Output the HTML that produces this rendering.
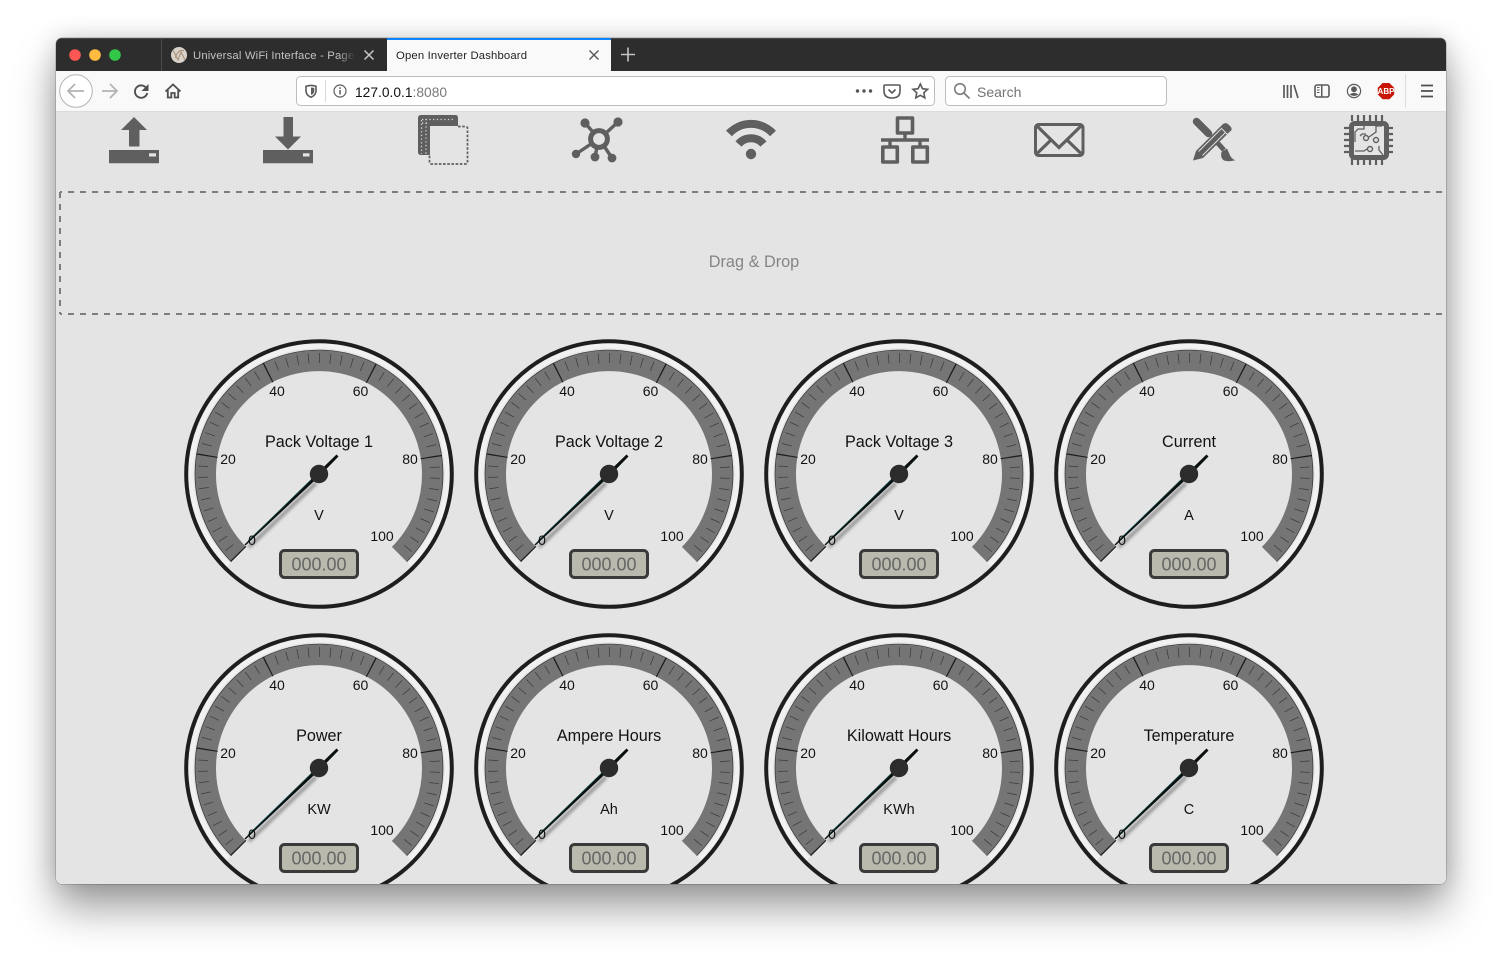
<!DOCTYPE html>
<html><head><meta charset="utf-8"><title>Open Inverter Dashboard</title>
<style>
html,body{margin:0;padding:0;width:1502px;height:958px;background:#fff;overflow:hidden;font-family:"Liberation Sans",sans-serif}
#win{position:absolute;left:56px;top:38px;width:1390px;height:846px;border-radius:6px;overflow:hidden;background:#e4e4e4}
#sh{position:absolute;left:56px;top:38px;width:1390px;height:846px;border-radius:6px;box-shadow:0 24px 42px rgba(0,0,0,.38),0 0 24px rgba(0,0,0,.15),0 0 0 .5px rgba(0,0,0,.3)}
svg{position:absolute;left:-56px;top:-38px;width:1502px;height:958px}
text{font-family:"Liberation Sans",sans-serif}
.n{font-size:14px;fill:#111;text-anchor:middle}
.t{font-size:16.2px;fill:#111;text-anchor:middle}
.u{font-size:14.5px;fill:#111;text-anchor:middle}
.l{font-size:18px;fill:#666;text-anchor:middle}
.i{fill:#5f5f5f}
.s{fill:none;stroke:#5f5f5f}
.b{fill:none;stroke:#5a5a5c;stroke-width:1.6}
.gz{filter:blur(.35px)}
</style></head><body>
<div id="sh"></div>
<div id="win">
<svg viewBox="0 0 1502 958">
<defs>
<filter id="ns" x="-30%" y="-30%" width="160%" height="160%"><feGaussianBlur stdDeviation="1.6"/></filter>
<linearGradient id="fade" x1="0" x2="1"><stop offset="0" stop-color="#2d2d2d" stop-opacity="0"/><stop offset="1" stop-color="#2d2d2d"/></linearGradient>
<g id="dial">
<path d="M-91 91A128.700 128.700 0 1 1 91 91" fill="none" stroke="#f1f1f1" stroke-width="6"/>
<circle r="132.800" fill="none" stroke="#1e1e1e" stroke-width="4"/>
<path d="M-80.300 80.300A113.500 113.500 0 1 1 80.300 80.300" fill="none" stroke="#757575" stroke-width="21"/>
<path d="M-87.700 87.700A124 124 0 1 1 87.700 87.700" fill="none" stroke="#333" stroke-width=".7"/>
<path d="M-82 82A116 116 0 1 1 82 82" fill="none" stroke="#3c3c3c" stroke-width="10" stroke-dasharray=".75 10.18"/>
<path d="M-80.300 80.300A113.500 113.500 0 1 1 80.300 80.300" fill="none" stroke="#1c1c1c" stroke-width="21.500" stroke-dasharray="1.200 105.770"/>
<path d="M-70 73L-3 9" fill="none" stroke="#000" stroke-width="3" opacity=".42" filter="url(#ns)"/>
<path d="M-74.500 70.500L-1.300 -1.300L17.500 -19.500L19.500 -17.500L1.300 1.300L-73.500 71.500Z" fill="#0a0f0f"/>
<path d="M-71 67L-8 6" fill="none" stroke="#0e4a4a" stroke-width=".7"/>
<circle r="9.200" fill="#2c2c2c"/>
</g>
</defs>
<rect x="0" y="0" width="1502" height="958" fill="#e4e4e4"/>
<!-- tab strip -->
<rect x="56" y="38" width="1390" height="33" fill="#2d2d2d"/>
<rect x="56" y="38" width="1390" height="1" fill="#4a4a4a"/>
<circle cx="75" cy="55" r="5.800" fill="#fc5753"/><circle cx="95" cy="55" r="5.800" fill="#fdbc40"/><circle cx="115" cy="55" r="5.800" fill="#33c748"/>
<rect x="161" y="39" width="1" height="32" fill="#4c4c4c"/>
<circle cx="179" cy="55" r="8" fill="#d8d4cc"/>
<path d="M173 50L178 60L181 52L185 60M175 58Q179 48 184 51" fill="none" stroke="#a98a70" stroke-width="1"/>
<text x="193" y="59" font-size="11.300" fill="#c4c4c4" letter-spacing=".16">Universal WiFi Interface - Page</text>
<rect x="338" y="42" width="17" height="26" fill="url(#fade)"/>
<rect x="355" y="42" width="31" height="26" fill="#2d2d2d"/>
<path d="M364.500 50.500l9 9M373.500 50.500l-9 9" stroke="#c8c8c8" stroke-width="1.500" fill="none"/>
<rect x="387" y="38" width="224" height="33" fill="#f9f9fa"/>
<rect x="387" y="38" width="224" height="2" fill="#0a84ff"/>
<text x="396" y="59" font-size="11.300" fill="#222" letter-spacing=".16">Open Inverter Dashboard</text>
<path d="M589.500 50.500l9 9M598.500 50.500l-9 9" stroke="#555" stroke-width="1.400" fill="none"/>
<path d="M628 47.500v14M621 54.500h14" stroke="#c4c4c4" stroke-width="1.600" fill="none"/>
<!-- toolbar -->
<rect x="56" y="71" width="1390" height="40" fill="#f9f9fa"/>
<rect x="56" y="111" width="1390" height="1" fill="#dcdcdc"/>
<circle cx="76" cy="91" r="16.300" fill="#fff" stroke="#b4b4b6" stroke-width="1"/>
<path d="M84 91H68.500M75 84l-7 7 7 7" fill="none" stroke="#b2b2b4" stroke-width="1.700"/>
<path d="M117 91H102M110 84l7 7-7 7" fill="none" stroke="#b2b2b4" stroke-width="1.700"/>
<path d="M147 89.500a6.200 6.200 0 1 0 .2 3.500" fill="none" stroke="#4f4f51" stroke-width="1.900"/>
<path d="M148.500 84v7h-7Z" fill="#4f4f51"/>
<path d="M165.500 91.500L173 84.500l7.500 7M167.800 90v7.500h3.500v-4.500h3.400v4.500h3.500V90" fill="none" stroke="#4f4f51" stroke-width="1.800"/>
<rect x="296.500" y="76.500" width="638" height="29" rx="4" fill="#fff" stroke="#bdbdbd"/>
<path d="M306 86.200q5-1.600 10 0v4.500q0 4.500-5 6.500q-5-2-5-6.500Z" fill="none" stroke="#5a5a5c" stroke-width="1.600"/>
<path d="M311 87.500q2 0 3.300.5v3q0 2.500-3.300 4Z" fill="#5a5a5c"/>
<rect x="325" y="80" width="1" height="22" fill="#d8d8d8"/>
<circle cx="340" cy="91" r="6" fill="none" stroke="#5a5a5c" stroke-width="1.200"/>
<rect x="339.300" y="90" width="1.500" height="4.500" fill="#5a5a5c"/><rect x="339.300" y="87.300" width="1.500" height="1.600" fill="#5a5a5c"/>
<text x="355" y="97" font-size="13.800" fill="#111">127.0.0.1<tspan fill="#7a7a7a">:8080</tspan></text>
<circle cx="857.500" cy="91" r="1.700" fill="#55555a"/><circle cx="864" cy="91" r="1.700" fill="#55555a"/><circle cx="870.500" cy="91" r="1.700" fill="#55555a"/>
<path d="M885 85h14q1 0 1 1v5q0 7-8 7t-8-7v-5q0-1 1-1Z" class="b"/>
<path d="M888.500 89.500l3.500 3.500 3.500-3.500" class="b"/>
<path d="M920.300 84l2.200 4.700 5.100.6-3.800 3.500 1 5-4.500-2.500-4.500 2.500 1-5-3.800-3.500 5.100-.6Z" class="b"/>
<rect x="945.500" y="76.500" width="221" height="29" rx="4" fill="#fff" stroke="#bdbdbd"/>
<circle cx="960" cy="89" r="5.300" fill="none" stroke="#7f7f81" stroke-width="1.600"/>
<path d="M964 93l5.500 5.500" stroke="#7f7f81" stroke-width="1.800"/>
<text x="977" y="97" font-size="14" fill="#737373">Search</text>
<path d="M1284 85v13M1287.500 85v13M1291 85v13M1294 85l4 13" fill="none" stroke="#5a5a5c" stroke-width="1.700"/>
<rect x="1315" y="85" width="14" height="12" rx="2" class="b"/>
<rect x="1321" y="85" width="1.500" height="12" fill="#5a5a5c"/><path d="M1317 87.500h2.500M1317 90h2.500M1317 92.500h2.500" stroke="#5a5a5c" stroke-width="1"/>
<circle cx="1354" cy="91" r="6.600" fill="none" stroke="#5a5a5c" stroke-width="1.200"/>
<circle cx="1354" cy="89.300" r="2.900" fill="#5a5a5c"/><path d="M1349.500 94.500q4.500-3.200 9 0q-4.500 3-9 0Z" fill="#5a5a5c"/>
<path d="M1382.600 83h6.800l4.800 4.800v6.600l-4.800 4.800h-6.800l-4.800-4.800v-6.600Z" fill="#c81505"/>
<text x="1386" y="94.200" font-size="8" font-weight="bold" fill="#fff" text-anchor="middle">ABP</text>
<rect x="1405" y="74" width="1" height="34" fill="#dcdcdc"/>
<path d="M1421 85.500h12M1421 91h12M1421 96.500h12" stroke="#4f4f51" stroke-width="1.700"/>
<!-- dashboard icons -->
<path class="i" d="M134 117L147 130H139.500V146.500H129V130H121Z"/>
<path class="i" d="M109 150H159V163.300H109Z"/><rect x="149" y="153.300" width="7" height="3.200" fill="#e4e4e4"/>
<path class="i" d="M283.500 117H293V136.500H301L288 149.500L275 136.500H283.500Z"/>
<path class="i" d="M263 150H313V163.300H263Z"/><rect x="303" y="153.300" width="6.500" height="3.200" fill="#e4e4e4"/>
<path class="i" d="M421 115H455.500Q458 115 458 118V126H430V155H421Q418 155 418 152V118Q418 115 421 115Z"/>
<path d="M422 119.500h33M422 123h5M426 119v36M421.500 120v34" stroke="#d6d6d6" stroke-width="1.200" stroke-dasharray="1.300 2.400" fill="none"/>
<path d="M458 126.500H465.500Q467.500 126.500 467.500 128.500V162Q467.500 164 465.500 164H431.500Q429.500 164 429.500 162V155" fill="none" stroke="#5f5f5f" stroke-width="1.700" stroke-dasharray="2.600 1.600"/>
<g class="s" stroke-width="3.400"><circle cx="599" cy="139" r="8.400" stroke-width="5"/><path d="M585 123L593 132M618 122L606 133M576 154L591 144M595 157L597 147M612 158L604 146"/></g>
<g class="i"><circle cx="585" cy="123" r="4.600"/><circle cx="618" cy="122" r="4.600"/><circle cx="576" cy="154" r="4.200"/><circle cx="595" cy="157" r="4.400"/><circle cx="612" cy="158" r="4.400"/></g>
<g class="s" stroke-width="8"><path d="M729 133.500A30 30 0 0 1 773 133.500"/><path d="M738.500 144A16.500 16.500 0 0 1 763.500 144"/></g>
<circle cx="751" cy="154" r="5.200" class="i"/>
<g class="s" stroke-width="3.600" stroke-linejoin="round"><rect x="897.500" y="118" width="15" height="15"/><rect x="882.800" y="147" width="14.500" height="15"/><rect x="912.800" y="147" width="14.500" height="15"/></g>
<path class="i" d="M903.300 134h3.400v4.300H929v3.400H921.700v4h-3.400v-4H891.700v4h-3.400v-4H881v-3.400h22.300Z"/>
<rect x="1035.500" y="124.500" width="47.500" height="31" rx="3" class="s" stroke-width="3"/>
<path class="s" stroke-width="3.200" d="M1036.500 125.500L1059 147.500L1081.500 125.500M1036.500 154L1051.500 139.500M1081.500 154L1066.500 139.500"/>
<path class="s" stroke-width="7.500" d="M1196.500 121.500L1208.500 133.500" stroke-linecap="round"/>
<path class="s" stroke-width="5" d="M1214 139L1224 150"/>
<path class="i" d="M1221.500 152L1227 148.500L1229 153Q1231 159 1235.500 160.300Q1229 162 1224 160.500Q1220 158 1221.500 152Z"/>
<path class="i" d="M1193 160.500L1196 151L1222.500 124.500Q1225 122 1228 124L1231 127Q1232.500 130 1230.500 131L1203 158Z"/>
<path d="M1198.500 151.500L1221 129M1202.500 155.500L1225 133M1221 128L1227.500 134.500" stroke="#e4e4e4" stroke-width=".9" fill="none"/>
<rect x="1351.500" y="123.500" width="35" height="34" rx="3" class="s" stroke-width="5"/>
<path class="s" stroke-width="2.200" d="M1352 115v6M1358 115v6M1364 115v6M1370 115v6M1376 115v6M1382 115v6M1352 159v6M1358 159v6M1364 159v6M1370 159v6M1376 159v6M1382 159v6M1344 128h6M1344 134h6M1344 140h6M1344 146h6M1344 152h6M1388 128h5M1388 134h5M1388 140h5M1388 146h5M1388 152h5"/>
<path class="s" stroke-width="1.300" d="M1355 142v-10l3-3h6v-3M1360 136l2-2h4M1355 151h9l3-2h3M1383 155l-4-5v-4M1382 126h-6v6l-7 5M1376 142v-4"/>
<g fill="#e4e4e4" stroke="#5f5f5f" stroke-width="1.400"><circle cx="1366" cy="138" r="2.500"/><circle cx="1376" cy="140" r="2.500"/><circle cx="1370" cy="149" r="2.500"/></g>
<!-- drag drop -->
<path d="M60 192H1446M60 314H1446" fill="none" stroke="#7d7d7d" stroke-width="2" stroke-dasharray="6 6" stroke-dashoffset="4"/>
<path d="M60 192V314" fill="none" stroke="#7d7d7d" stroke-width="2" stroke-dasharray="6 6"/>
<text x="754" y="267" font-size="16.300" fill="#858585" text-anchor="middle">Drag &amp; Drop</text>
<!-- gauges -->
<g class="gz">
<use href="#dial" transform="translate(319 474)"/><use href="#dial" transform="translate(609 474)"/><use href="#dial" transform="translate(899 474)"/><use href="#dial" transform="translate(1189 474)"/>
<use href="#dial" transform="translate(319 768)"/><use href="#dial" transform="translate(609 768)"/><use href="#dial" transform="translate(899 768)"/><use href="#dial" transform="translate(1189 768)"/>
<g transform="translate(319 474)"><text class="n" x="-67" y="71">0</text><text class="n" x="-91" y="-10">20</text><text class="n" x="-42" y="-78">40</text><text class="n" x="41.500" y="-78">60</text><text class="n" x="91" y="-10">80</text><text class="n" x="63" y="67">100</text><text class="t" y="-27">Pack Voltage 1</text><text class="u" y="46">V</text><rect x="-38.500" y="76.500" width="77" height="27" rx="4" fill="#b9b9ad" stroke="#3a3a3a" stroke-width="3"/><text class="l" y="96.500">000.00</text></g>
<g transform="translate(609 474)"><text class="n" x="-67" y="71">0</text><text class="n" x="-91" y="-10">20</text><text class="n" x="-42" y="-78">40</text><text class="n" x="41.500" y="-78">60</text><text class="n" x="91" y="-10">80</text><text class="n" x="63" y="67">100</text><text class="t" y="-27">Pack Voltage 2</text><text class="u" y="46">V</text><rect x="-38.500" y="76.500" width="77" height="27" rx="4" fill="#b9b9ad" stroke="#3a3a3a" stroke-width="3"/><text class="l" y="96.500">000.00</text></g>
<g transform="translate(899 474)"><text class="n" x="-67" y="71">0</text><text class="n" x="-91" y="-10">20</text><text class="n" x="-42" y="-78">40</text><text class="n" x="41.500" y="-78">60</text><text class="n" x="91" y="-10">80</text><text class="n" x="63" y="67">100</text><text class="t" y="-27">Pack Voltage 3</text><text class="u" y="46">V</text><rect x="-38.500" y="76.500" width="77" height="27" rx="4" fill="#b9b9ad" stroke="#3a3a3a" stroke-width="3"/><text class="l" y="96.500">000.00</text></g>
<g transform="translate(1189 474)"><text class="n" x="-67" y="71">0</text><text class="n" x="-91" y="-10">20</text><text class="n" x="-42" y="-78">40</text><text class="n" x="41.500" y="-78">60</text><text class="n" x="91" y="-10">80</text><text class="n" x="63" y="67">100</text><text class="t" y="-27">Current</text><text class="u" y="46">A</text><rect x="-38.500" y="76.500" width="77" height="27" rx="4" fill="#b9b9ad" stroke="#3a3a3a" stroke-width="3"/><text class="l" y="96.500">000.00</text></g>
<g transform="translate(319 768)"><text class="n" x="-67" y="71">0</text><text class="n" x="-91" y="-10">20</text><text class="n" x="-42" y="-78">40</text><text class="n" x="41.500" y="-78">60</text><text class="n" x="91" y="-10">80</text><text class="n" x="63" y="67">100</text><text class="t" y="-27">Power</text><text class="u" y="46">KW</text><rect x="-38.500" y="76.500" width="77" height="27" rx="4" fill="#b9b9ad" stroke="#3a3a3a" stroke-width="3"/><text class="l" y="96.500">000.00</text></g>
<g transform="translate(609 768)"><text class="n" x="-67" y="71">0</text><text class="n" x="-91" y="-10">20</text><text class="n" x="-42" y="-78">40</text><text class="n" x="41.500" y="-78">60</text><text class="n" x="91" y="-10">80</text><text class="n" x="63" y="67">100</text><text class="t" y="-27">Ampere Hours</text><text class="u" y="46">Ah</text><rect x="-38.500" y="76.500" width="77" height="27" rx="4" fill="#b9b9ad" stroke="#3a3a3a" stroke-width="3"/><text class="l" y="96.500">000.00</text></g>
<g transform="translate(899 768)"><text class="n" x="-67" y="71">0</text><text class="n" x="-91" y="-10">20</text><text class="n" x="-42" y="-78">40</text><text class="n" x="41.500" y="-78">60</text><text class="n" x="91" y="-10">80</text><text class="n" x="63" y="67">100</text><text class="t" y="-27">Kilowatt Hours</text><text class="u" y="46">KWh</text><rect x="-38.500" y="76.500" width="77" height="27" rx="4" fill="#b9b9ad" stroke="#3a3a3a" stroke-width="3"/><text class="l" y="96.500">000.00</text></g>
<g transform="translate(1189 768)"><text class="n" x="-67" y="71">0</text><text class="n" x="-91" y="-10">20</text><text class="n" x="-42" y="-78">40</text><text class="n" x="41.500" y="-78">60</text><text class="n" x="91" y="-10">80</text><text class="n" x="63" y="67">100</text><text class="t" y="-27">Temperature</text><text class="u" y="46">C</text><rect x="-38.500" y="76.500" width="77" height="27" rx="4" fill="#b9b9ad" stroke="#3a3a3a" stroke-width="3"/><text class="l" y="96.500">000.00</text></g>
</g>
</svg>
</div>
</body></html>
